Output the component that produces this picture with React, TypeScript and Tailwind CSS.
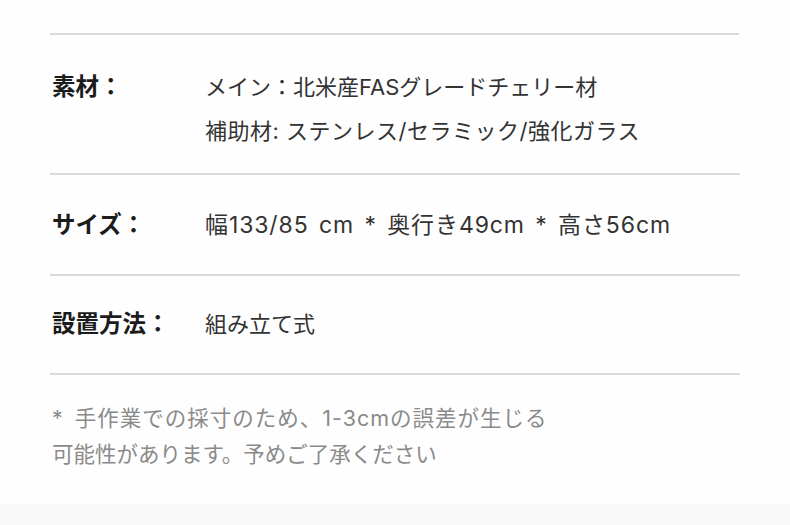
import React from "react";

const font = { fontFamily: 'Inter, "Noto Sans CJK JP", "Noto Sans", sans-serif' };

export default function App() {
  return (
    <div className="w-[790px] h-[525px] bg-[#fefefe] flex flex-col" style={font}>
      <div className="flex-1 pt-[33px] px-[50px] w-[790px]">
        <div className="w-[689px] border-t-2 border-[#dadada]" />
        <div className="flex pt-[30px] pb-[20px] border-b-2 border-[#dadada]">
          <div className="w-[155px] pl-[2px] text-[23.5px] font-bold text-[#1c1c1c] leading-[44px]">素材：</div>
          <div className="text-[22px] text-[#333] leading-[44px]">
            <div>メイン：北米産FASグレードチェリー材</div>
            <div className="tracking-[0.5px]">補助材: ステンレス/セラミック/強化ガラス</div>
          </div>
        </div>
        <div className="flex pt-[28px] pb-[27px] border-b-2 border-[#dadada]">
          <div className="w-[155px] pl-[2px] text-[23.5px] font-bold text-[#1c1c1c] leading-[44px]">サイズ：</div>
          <div className="text-[23px] text-[#333] leading-[44px] tracking-[0.9px] [word-spacing:3px]">幅133/85 cm * 奥行き49cm * 高さ56cm</div>
        </div>
        <div className="flex pt-[26px] pb-[27px] border-b-2 border-[#dadada]">
          <div className="w-[155px] pl-[2px] text-[23.5px] font-bold text-[#1c1c1c] leading-[44px]">設置方法：</div>
          <div className="text-[22px] text-[#333] leading-[44px]">組み立て式</div>
        </div>
        <div className="pt-[25px] pl-[2px] text-[21.5px] text-[#8a8a8a] leading-[36px]">
          <div className="tracking-[1px] [word-spacing:4px]">* 手作業での採寸のため、1-3cmの誤差が生じる</div>
          <div>可能性があります。予めご了承ください</div>
        </div>
      </div>
      <div className="h-[21px] bg-[#f8f8f8]" />
    </div>
  );
}
